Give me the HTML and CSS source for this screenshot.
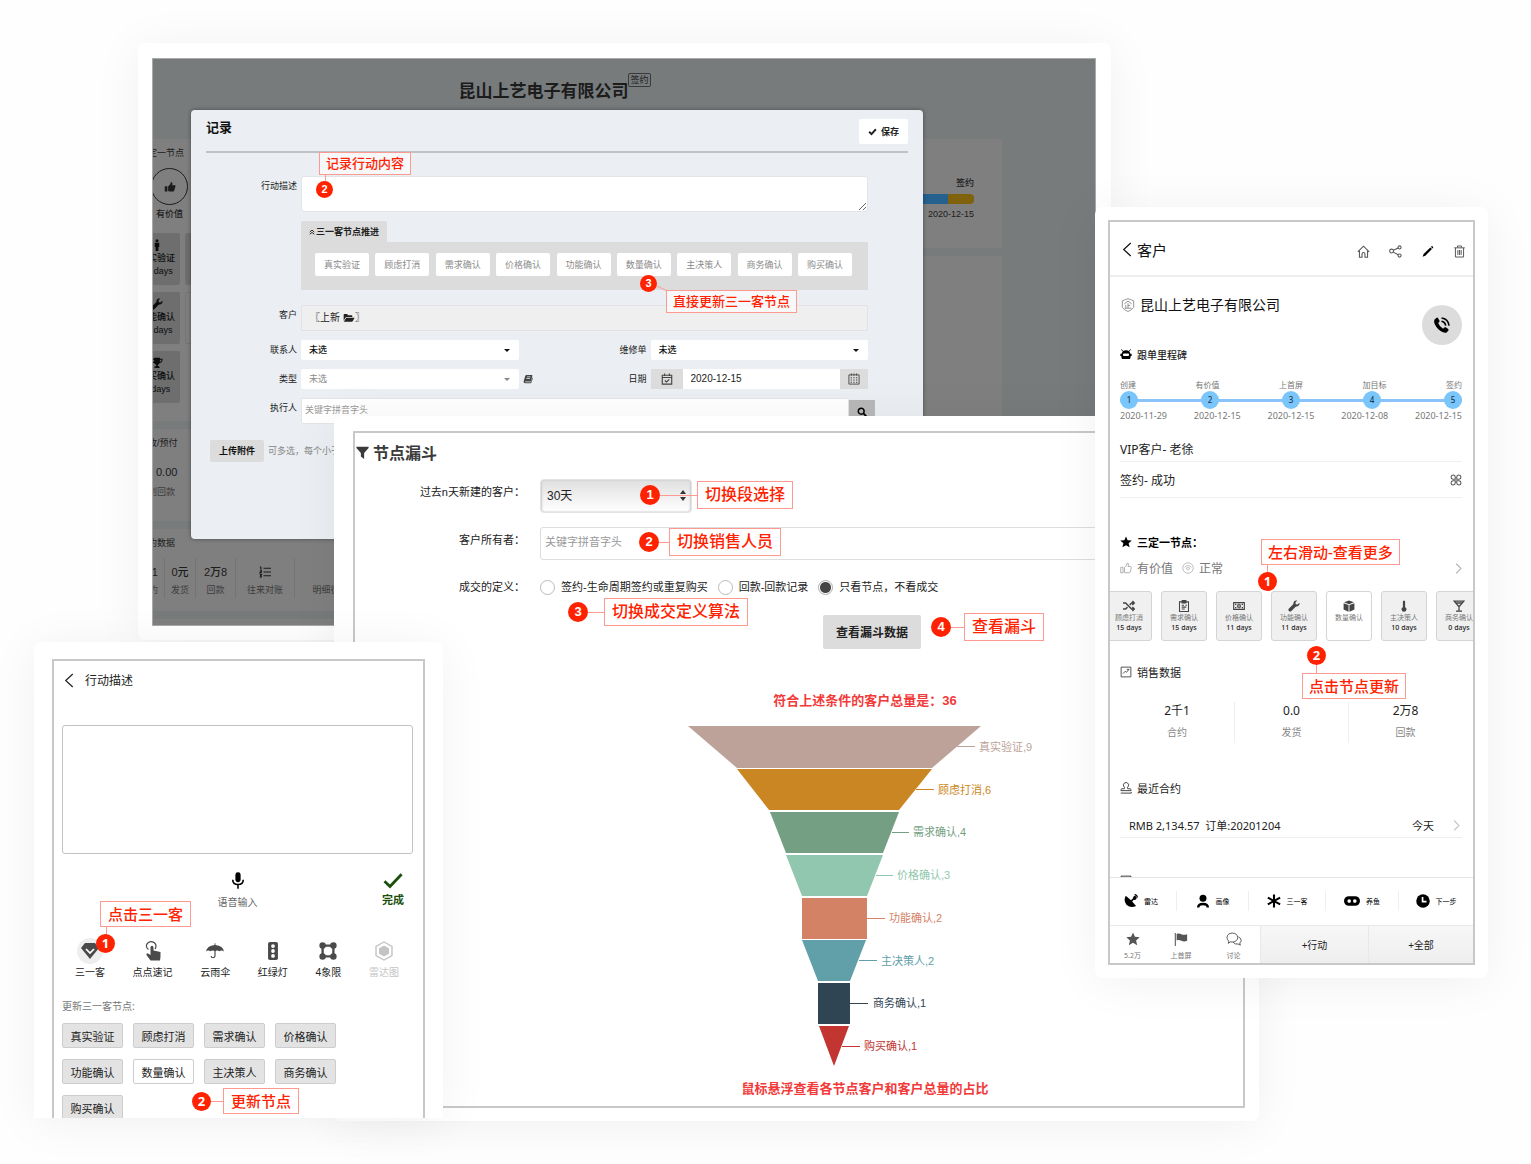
FILE: index.html
```html
<!DOCTYPE html>
<html lang="zh-CN">
<head>
<meta charset="utf-8">
<meta name="viewport" content="width=device-width, initial-scale=1">
<title>三一客节点</title>
<link rel="stylesheet" href="styles.css">
</head>
<body>
<svg class="sprite" aria-hidden="true">
  <symbol id="i-thumb" viewBox="0 0 16 16"><path d="M1 7h3.500v7H1zM5.500 7.200 8.600 4 9 1.300c1.800-.2 2.600 1.200 2 4.200h3.200c1 0 1.400.8 1.100 1.600l-1.600 5.600c-.3.900-.8 1.300-1.700 1.300H7.300l-1.800-.8z"/></symbol>
  <symbol id="i-person" viewBox="0 0 16 16"><circle cx="8" cy="2.200" r="2"/><path d="M5 5h6v5.500H9.900V16H6.100v-5.500H5z"/></symbol>
  <symbol id="i-wrench" viewBox="0 0 16 16"><path d="M15.200 3.600 12.600 6l-2.300-.4L9.900 3.400 12.400.8C9.500-.2 6.700 2 7.300 5.400L1 11.700c-1.700 1.800 1.400 4.900 3.200 3.200l6.400-6.300c3 .7 5.400-2 4.600-5z"/></symbol>
  <symbol id="i-cup" viewBox="0 0 16 16"><path d="M4 1h8v1.300h3.500c0 4-1.600 5.600-4.200 6-.6 1.200-1.300 1.700-2.200 2V12c1.700.2 2.400.9 2.400 2.500h-7c0-1.600.7-2.300 2.400-2.500v-1.700c-.9-.3-1.600-.8-2.200-2C2.100 7.900.5 6.300.5 2.300H4zM2 3.700c.2 1.700.8 2.600 2.100 3V3.700zm12 0h-2.100v3c1.300-.4 1.900-1.300 2.100-3z"/></symbol>
  <symbol id="i-list" viewBox="0 0 16 16"><path d="M6 3h10M6 8h10M6 13h10M2.500 1v4M1.500 2l1-1M1.200 6.500h2v1.300l-2 1.500h2M1.200 11.500h2l-1 1.500q1.500 0 .8 1.500-.6.600-1.800.1" fill="none" stroke="currentColor" stroke-width="1.600"/></symbol>
  <symbol id="i-check" viewBox="0 0 16 16"><path d="M2 8.500 6.200 12.500 14 4" fill="none" stroke="currentColor" stroke-width="3.400"/></symbol>
  <symbol id="i-tick" viewBox="0 0 20 16"><path d="M1.500 8.800 7 14 18.600 1.800" fill="none" stroke="currentColor" stroke-width="2.800"/></symbol>
  <symbol id="i-up" viewBox="0 0 16 16"><path d="M2 8l6-5 6 5M2 14l6-5 6 5" fill="none" stroke="currentColor" stroke-width="2.600"/></symbol>
  <symbol id="i-folder" viewBox="0 0 18 16"><path d="M1 12V3q0-1 1-1h4q1 0 1 1v1h6q1 0 1 1v1.500H5.500q-1.300 0-2 1.200zM4.800 7.700H17.500L14.500 13q-.4.700-1.200.7H1.200z"/></symbol>
  <symbol id="i-book" viewBox="0 0 16 16"><path d="M5.500 1.500H14q1.300 0 1 1.300L13 11q-.3 1-1.300 1H3.600q-1 .9.400 1.200h8.800L15 5.500q.9.700.6 1.800L13.600 13.600q-.3 1-1.500 1H3.500Q.5 14.500 1 11.500L3.600 3q.4-1.500 1.900-1.500zM6.500 4l-.3 1.200h5.600l.3-1.200zm-.8 2.500-.3 1.200H11l.3-1.200z"/></symbol>
  <symbol id="i-caldone" viewBox="0 0 16 16"><path d="M1.700 3h12.600v11.800H1.700zM2 6h12M4.800.5v3.500M11.200.5v3.500M5.200 10l2 2 3.800-3.600" fill="none" stroke="currentColor" stroke-width="1.500"/></symbol>
  <symbol id="i-cal" viewBox="0 0 16 16"><path d="M1.200 2.500h13.600v12.300H1.200zM4.500.5v3M8 .5v3M11.500.5v3" fill="none" stroke="currentColor" stroke-width="1.200"/><path d="M3.500 6.300h9M3.500 9.300h9M3.500 12.300h9" fill="none" stroke="currentColor" stroke-width="1.500" stroke-dasharray="1.800 1.800"/></symbol>
  <symbol id="i-search" viewBox="0 0 16 16"><path d="M10.300 10.300 15 15" stroke="currentColor" stroke-width="3"/><circle cx="6.700" cy="6.700" r="4.700" fill="none" stroke="currentColor" stroke-width="2.400"/></symbol>
  <symbol id="i-funnel" viewBox="0 0 16 16"><path d="M.5 1h15v1.500L10 8.500V16l-4-3V8.500L.5 2.500z"/></symbol>
  <symbol id="i-back" viewBox="0 0 10 16"><path d="M9 1 1.500 8 9 15" fill="none" stroke="currentColor" stroke-width="1.300"/></symbol>
  <symbol id="i-next" viewBox="0 0 10 16"><path d="M1.500 1 8.500 8l-7 7" fill="none" stroke="currentColor" stroke-width="1.500"/></symbol>
  <symbol id="i-home" viewBox="0 0 16 16"><path d="M1 8.500 8 1.500l7 7M3 7v8h3.200v-4q0-1.700 1.800-1.700t1.800 1.700v4H13V7" fill="none" stroke="currentColor" stroke-width="1.300"/></symbol>
  <symbol id="i-share" viewBox="0 0 16 16"><g fill="none" stroke="currentColor" stroke-width="1.300"><circle cx="3.200" cy="7.500" r="2.400"/><circle cx="13" cy="3" r="1.900"/><circle cx="13" cy="13" r="1.900"/><path d="M5.400 6.500 11.200 3.700M5.300 8.800l6 3.200"/></g></symbol>
  <symbol id="i-pen" viewBox="0 0 16 16"><path d="M2 14.500 3.200 11 11.500 3l2 2-8.200 8.300zM12.200 2.300l.7-.7q1-.5 1.700.3.700.8.200 1.700l-.7.700z"/></symbol>
  <symbol id="i-bin" viewBox="0 0 16 16"><path d="M1.500 3.500h13M5.500 3.200V1.200h5v2M3 3.500v11.300h10V3.500M6 6.200v6M8 6.200v6M10 6.200v6" fill="none" stroke="currentColor" stroke-width="1.200"/></symbol>
  <symbol id="i-firm" viewBox="0 0 16 16"><g fill="none" stroke="currentColor" stroke-width="1"><path d="M8 .8 14.500 3.200v7.600Q12 14.200 8 15.400 4 14.200 1.500 10.800V3.200z"/><path d="M3.800 6.800 8 3.500l4.200 3.300M8 6v5.500M8 8.500h2.500M5.500 8v3.500M4 11.700h8"/></g></symbol>
  <symbol id="i-call" viewBox="0 0 16 16"><path d="M1.200 3.300 3.200 1.500q.8-.4 1.300.4l1.300 2.300q.3.700-.3 1.200l-.9.900q1 3 4.400 5l1-1q.6-.6 1.300-.2l2.200 1.400q.7.600.2 1.300l-1.600 1.900Q9.500 15.500 5 12 0 7 1.200 3.300z"/><path d="M7.500 4.700q3.200.5 3.800 3.900M7.600 1.800q5.800.7 6.700 6.800" fill="none" stroke="currentColor" stroke-width="1.500"/></symbol>
  <symbol id="i-robot" viewBox="0 0 16 16"><path d="M4 4.500 1.800 1.800M12 4.500l2.200-2.700" stroke="currentColor" stroke-width="1.200"/><path fill-rule="evenodd" d="M8 3q5 0 5.700 4.500H15.500v3h-1.300q0 4.300-2.400 4.300H4.200q-2.400 0-2.400-4.300H.5v-3h1.800Q3 3 8 3zM5.500 7.300a1.700 1.700 0 0 0 0 3.400h5a1.700 1.700 0 0 0 0-3.400z"/></symbol>
  <symbol id="i-quad" viewBox="0 0 16 16"><g fill="none" stroke="currentColor" stroke-width="1.400"><path d="M7 7H4A2.800 2.800 0 1 1 7 4zM9 7V4a2.800 2.800 0 1 1 3 3zM7 9H4a2.800 2.800 0 1 0 3 3zM9 9v3a2.800 2.800 0 1 0 3-3z"/></g></symbol>
  <symbol id="i-star" viewBox="0 0 16 16"><path d="m8 .5 2.200 5 5.500.5-4.200 3.600 1.300 5.400L8 12.200 3.200 15l1.300-5.400L.3 6l5.500-.5z"/></symbol>
  <symbol id="i-like" viewBox="0 0 16 16"><path d="M1 7h3v7.500H1zM6 7l3-2.500V2q2-1.500 2.500.8 0 1.500-.7 3.200h3.700q.8.300.6 1.300l-1.400 6q-.3 1-1.300 1H6z" fill="none" stroke="currentColor" stroke-width="1.200"/></symbol>
  <symbol id="i-heart" viewBox="0 0 16 16"><g fill="none" stroke="currentColor"><circle cx="8" cy="8" r="7"/><path d="M3.500 7q4.500-4.500 9 0M5.500 8.500q2.500-2.500 5 0L8 11z"/></g></symbol>
  <symbol id="i-shuffle" viewBox="0 0 16 16"><path d="M0 4h3.500l8 8H14M0 12h3.500l2.500-2.500M9 6.500 11.500 4H14M12.500 1.500 15 4l-2.500 2.500M12.500 9.500 15 12l-2.500 2.500" fill="none" stroke="currentColor" stroke-width="1.900"/></symbol>
  <symbol id="i-clip" viewBox="0 0 16 16"><path d="M2 2.500h12v12.700H2zM5.500.8h5V4h-5zM5 7h3M5 9.500h6M5 12h4M10 7h2" fill="none" stroke="currentColor" stroke-width="1.400"/></symbol>
  <symbol id="i-cash" viewBox="0 0 18 16"><path d="M1 3h16v10H1zM9 5.500v5M3 5.500h2M13 5.500h2M3 10.500h2M13 10.500h2" fill="none" stroke="currentColor" stroke-width="1.700"/><ellipse cx="9" cy="8" rx="2.600" ry="3" fill="none" stroke="currentColor" stroke-width="1.300"/></symbol>
  <symbol id="i-box" viewBox="0 0 16 16"><path d="M8 .5 14.500 3 8 5.500 1.500 3zM.8 4.200l6.600 2.600v8.700L.8 12.500zM15.200 4.200 8.600 6.800v8.700l6.600-3z"/></symbol>
  <symbol id="i-thermo" viewBox="0 0 16 16"><path d="M6.500 2q1.500-2.500 3 0v7.500q2 1 1.800 3Q11 15.500 8 15.700q-3-.2-3.300-3.200-.2-2 1.800-3z"/></symbol>
  <symbol id="i-glass" viewBox="0 0 16 16"><path d="M1.500 1.500h13L8 9zM8 9v5.500M4 14.700h8M4 4h8" fill="none" stroke="currentColor" stroke-width="1.700"/></symbol>
  <symbol id="i-chart" viewBox="0 0 16 16"><path d="M1.500 1.500h13v13h-13zM4 10l3-3 1.500 1.500L12 4.500M9 4.500h3.200" fill="none" stroke="currentColor" stroke-width="1.200"/></symbol>
  <symbol id="i-stamp" viewBox="0 0 16 16"><path d="M5.800 9 6 7Q4 5.500 4.700 3q1-2.300 3.300-2.300T11.300 3Q12 5.500 10 7l.2 2h3.300q1.300.2 1.300 2.500H1.200Q1.200 9.200 2.500 9zM1 14.800h14v-1.500" fill="none" stroke="currentColor" stroke-width="1.300"/></symbol>
  <symbol id="i-dish" viewBox="0 0 16 16"><path d="M2 2Q-1 8 2.800 12.200 7.500 16.800 13.800 13.800L9.300 8.600l1.900-2q1.600.5 2.600-.5t.6-2.500Q13.500 1.900 11.800 2.300q-1.700.7-1.500 2.500L8 7.200z"/><path d="M12 .7q3 .3 3.400 3.300" fill="none" stroke="currentColor" stroke-width="1.200"/></symbol>
  <symbol id="i-user" viewBox="0 0 16 16"><circle cx="8" cy="4.800" r="4"/><path d="M2.500 15.500q0-4 5.500-4t5.500 4" fill="none" stroke="currentColor" stroke-width="2.800"/></symbol>
  <symbol id="i-aster" viewBox="0 0 16 16"><path d="M8 .5v15M1 4.200l14 7.600M1 11.800l14-7.600" stroke="currentColor" stroke-width="2.400"/></symbol>
  <symbol id="i-goggle" viewBox="0 0 20 16"><path fill-rule="evenodd" d="M6 2h8a6 6 0 0 1 0 12H6A6 6 0 0 1 6 2zm.5 3.800a2.200 2.200 0 1 0 .01 0zm7 0a2.200 2.200 0 1 0 .01 0z"/></symbol>
  <symbol id="i-clock" viewBox="0 0 16 16"><circle cx="8" cy="8" r="7.700"/><path d="M7.500 3.500v5.300H12" fill="none" stroke="#fff" stroke-width="1.900"/></symbol>
  <symbol id="i-flag" viewBox="0 0 16 16"><path d="M1.500 1v15" stroke="currentColor" stroke-width="1.200"/><path d="M3 2q3-1 5.500.5t6.500 0V10q-3.500 1.500-6.500 0T3 9.500z"/></symbol>
  <symbol id="i-chat" viewBox="0 0 18 16"><g fill="none" stroke="currentColor" stroke-width="1.100"><path d="M3 10.500Q1 8.800 1 6.400 1.300 1.500 7 1.200q6 .3 6.200 5.200Q13 11 7 11.500L4.800 11.300 2.500 13z"/><path d="M14 5.500q3 1.300 3.200 4-.2 2-1.600 3l.6 2.500-2.600-1.300Q10 14.500 8 11.700"/></g></symbol>
  <symbol id="i-mic" viewBox="0 0 16 20"><rect x="5" y=".5" width="6" height="11.500" rx="2.800"/><path d="M2 9q0 5.500 6 5.500T14 9M8 14.500v5" fill="none" stroke="currentColor" stroke-width="1.800"/></symbol>
  <symbol id="i-gem" viewBox="0 0 18 16"><path d="M4 0h10l4 5-9 11L0 5z"/><path d="M5 6l4 4 4-4" fill="none" stroke="#fff" stroke-width="1.700"/></symbol>
  <symbol id="i-tap" viewBox="0 0 16 20"><path d="M5.500 6V14L2.500 12.300Q1 12.500 1.500 14l4 5.500H15q.7-3 .5-8.500l-7-1.500V6Q7 3.500 5.500 6z"/><path d="M3.500 8.500Q1 6.800 1.500 4 3 .6 6.500.7q4 .6 4.500 4 0 2.300-1 3.300" fill="none" stroke="currentColor" stroke-width="1.200"/></symbol>
  <symbol id="i-rain" viewBox="0 0 20 18"><path d="M0 9.500Q1 3 9.500 2.200V.5h1v1.700Q19 3 20 9.500 17.500 7.600 15 9.300 12.500 7.600 10 9.300 7.500 7.600 5 9.300 2.500 7.600 0 9.500z"/><path d="M10 8.500v6q-.3 2-2.300 2t-2-2" fill="none" stroke="currentColor" stroke-width="1.300"/></symbol>
  <symbol id="i-light" viewBox="0 0 12 20"><rect x=".5" y="0" width="11" height="20" rx="2"/><g fill="#fff"><circle cx="6" cy="4.500" r="2.100"/><circle cx="6" cy="10" r="2.100"/><circle cx="6" cy="15.500" r="2.100"/></g></symbol>
  <symbol id="i-nodes" viewBox="0 0 20 20"><path d="M4 4h12v12H4z" fill="none" stroke="currentColor" stroke-width="2.600"/><circle cx="4" cy="4" r="3.600"/><circle cx="16" cy="4" r="3.600"/><circle cx="4" cy="16" r="3.600"/><circle cx="16" cy="16" r="3.600"/></symbol>
  <symbol id="i-hex" viewBox="0 0 20 20"><path d="M10 1l8 4.500v9L10 19l-8-4.500v-9z" fill="none" stroke="currentColor" stroke-width="1.400"/><path d="M10 4.500 15 7.300v5.400l-5 2.800-5-2.800V7.300z"/></symbol>
</svg>

<main class="stage">

  <section class="window win-record">
    <div class="screen screen-dim">
      <header class="firm">
        <h1>昆山上艺电子有限公司</h1><span class="firm-tag">签约</span>
      </header>
      <div class="board">
        <div class="board-col">
          <div class="panel panel-nodes">
            <h2>三定一节点</h2>
            <span class="round"><svg class="ic12"><use href="#i-thumb"/></svg></span>
            <p class="round-label">有价值</p>
            <div class="dim-tiles">
              <div class="dim-tile"><svg class="ic12"><use href="#i-person"/></svg><span>真实验证</span><b>15 days</b></div><div class="dim-tile"></div>
              <div class="dim-tile"><svg class="ic12"><use href="#i-wrench"/></svg><span>功能确认</span><b>11 days</b></div><div class="dim-tile clear"></div>
              <div class="dim-tile"><svg class="ic12"><use href="#i-cup"/></svg><span>购买确认</span><b>0 days</b></div>
            </div>
          </div>
          <div class="panel panel-plan">
            <h2>应收/预付</h2>
            <strong>0.00</strong>
            <span>计划回款</span>
          </div>
          <div class="panel panel-data">
            <h2>合约数据</h2>
            <ul class="dim-stats">
              <li><strong>2千1</strong><span>合约</span></li>
              <li><strong>0元</strong><span>发货</span></li>
              <li><strong>2万8</strong><span>回款</span></li>
              <li><strong><svg class="ic12"><use href="#i-list"/></svg></strong><span>往来对账</span></li>
              <li><strong></strong><span>明细往来</span></li>
            </ul>
          </div>
          <div class="panel panel-stub"></div>
        </div>
        <div class="board-col">
          <div class="panel panel-bar">
            <span class="bar-name">签约</span>
            <div class="bar"><i></i><i></i></div>
            <span>2020-12-15</span>
          </div>
          <div class="panel panel-rest"></div>
        </div>
      </div>

      <form class="modal">
        <header class="modal-head">
          <h2>记录</h2>
          <button type="button" class="save"><svg class="ic8"><use href="#i-check"/></svg>保存</button>
        </header>
        <div class="fields">
          <div class="line line-text">
            <label for="desc">行动描述</label>
            <textarea id="desc"></textarea>
          </div>
          <div class="line line-nodes">
            <div class="push">
              <button type="button" class="tab"><svg class="ic6"><use href="#i-up"/></svg>三一客节点推进</button>
              <div class="push-list">
                <button type="button">真实验证</button><button type="button">顾虑打消</button><button type="button">需求确认</button><button type="button">价格确认</button><button type="button">功能确认</button><button type="button">数量确认</button><button type="button">主决策人</button><button type="button">商务确认</button><button type="button">购买确认</button>
              </div>
            </div>
          </div>
          <div class="line line-client">
            <span class="cap">客户</span>
            <div class="client">〖上新 <svg class="ic12"><use href="#i-folder"/></svg>〗</div>
          </div>
          <div class="line line-two">
            <label for="contact">联系人</label>
            <div class="pick"><select id="contact"><option>未选</option></select></div>
            <label for="repair">维修单</label>
            <div class="pick"><select id="repair"><option>未选</option></select></div>
          </div>
          <div class="line line-two">
            <label for="kind">类型</label>
            <div class="pick pale"><select id="kind"><option>未选</option></select></div>
            <div class="cap-pair"><svg class="ic10"><use href="#i-book"/></svg><label for="date">日期</label></div>
            <div class="date"><span><svg class="ic12"><use href="#i-caldone"/></svg></span><input id="date" type="text" value="2020-12-15"><button type="button" aria-label="日历"><svg class="ic12"><use href="#i-cal"/></svg></button></div>
          </div>
          <div class="line line-who">
            <label for="who">执行人</label>
            <div class="who"><input id="who" type="text" placeholder="关键字拼音字头"><button type="button" aria-label="搜索"><svg class="ic10"><use href="#i-search"/></svg></button></div>
          </div>
        </div>
        <footer class="upload"><button type="button">上传附件</button><span>可多选，每个小于10M</span></footer>
      </form>

      <div class="note note-down small n-desc"><span class="tag">记录行动内容</span><i class="stem"></i><b class="pin">2</b></div>
      <div class="note small n-push"><b class="pin">3</b><svg class="slant" viewBox="0 0 9 6"><path d="M0 1 9 5.500" stroke="#ff9a90" fill="none"/></svg><span class="tag">直接更新三一客节点</span></div>
    </div>
  </section>

  <section class="window win-funnel">
    <div class="screen screen-funnel">
      <h2 class="funnel-title"><svg class="ic13"><use href="#i-funnel"/></svg>节点漏斗</h2>
      <form class="query">
        <div class="q-row">
          <label for="days">过去n天新建的客户：</label>
          <div class="days"><select id="days"><option>30天</option></select></div>
        </div>
        <div class="q-row">
          <label for="owner">客户所有者：</label>
          <input id="owner" type="text" placeholder="关键字拼音字头">
        </div>
        <div class="q-row q-radios">
          <span class="q-cap">成交的定义：</span>
          <div class="radios">
            <label><input type="radio" name="deal">签约-生命周期签约或重复购买</label>
            <label><input type="radio" name="deal">回款-回款记录</label>
            <label><input type="radio" name="deal" checked>只看节点，不看成交</label>
          </div>
        </div>
        <button type="button" class="run">查看漏斗数据</button>
      </form>
      <figure class="chart">
        <p>符合上述条件的客户总量是：36</p>
        <svg class="funnel" viewBox="540 716 650 356" role="img" aria-label="节点漏斗">
          <path fill="#bda29a" d="M688 726H981L932 768H737z"/>
          <path fill="#ca8622" d="M737 769H932L899 810H769z"/>
          <path fill="#749f83" d="M770 812H899L883 853H786z"/>
          <path fill="#91c7ae" d="M786 855H883L867 896H802z"/>
          <path fill="#d48265" d="M802 898H867V939H802z"/>
          <path fill="#61a0a8" d="M802 940H866L850 981H818z"/>
          <path fill="#2f4554" d="M818 983H850V1024H818z"/>
          <path fill="#c23531" d="M819 1026H849L834 1066z"/>
          <g fill="none">
            <path stroke="#bda29a" d="M957 746.500h18"/><path stroke="#ca8622" d="M916 789.500h18"/><path stroke="#749f83" d="M892 832.500h17"/><path stroke="#91c7ae" d="M876 875.500h17"/><path stroke="#d48265" d="M867 918.500h18"/><path stroke="#61a0a8" d="M859 960.500h18"/><path stroke="#2f4554" d="M850 1003.500h18"/><path stroke="#c23531" d="M842 1046.500h18"/>
          </g>
          <g class="funnel-text">
            <text x="979" y="751" fill="#bda29a">真实验证,9</text>
            <text x="938" y="794" fill="#ca8622">顾虑打消,6</text>
            <text x="913" y="836" fill="#749f83">需求确认,4</text>
            <text x="897" y="879" fill="#91c7ae">价格确认,3</text>
            <text x="889" y="922" fill="#d48265">功能确认,2</text>
            <text x="881" y="965" fill="#61a0a8">主决策人,2</text>
            <text x="873" y="1007" fill="#2f4554">商务确认,1</text>
            <text x="864" y="1050" fill="#c23531">购买确认,1</text>
          </g>
        </svg>
        <figcaption>鼠标悬浮查看各节点客户和客户总量的占比</figcaption>
      </figure>
      <div class="note n-days"><b class="pin">1</b><i class="stem long"></i><span class="tag">切换段选择</span></div>
      <div class="note n-owner"><b class="pin">2</b><i class="stem"></i><span class="tag">切换销售人员</span></div>
      <div class="note n-deal"><b class="pin">3</b><i class="stem wide"></i><span class="tag">切换成交定义算法</span></div>
      <div class="note n-run"><b class="pin">4</b><i class="stem"></i><span class="tag">查看漏斗</span></div>
    </div>
  </section>

  <section class="window win-client">
    <div class="screen screen-client">
      <header class="c-head">
        <a href="#" class="c-back"><svg class="chev"><use href="#i-back"/></svg>客户</a>
        <nav><a href="#" aria-label="首页"><svg class="ic13"><use href="#i-home"/></svg></a><a href="#" aria-label="分享"><svg class="ic13"><use href="#i-share"/></svg></a><a href="#" aria-label="编辑" class="ink"><svg class="ic13"><use href="#i-pen"/></svg></a><a href="#" aria-label="删除"><svg class="ic13"><use href="#i-bin"/></svg></a></nav>
      </header>
      <div class="c-body">
        <div class="c-intro">
          <div>
            <h1><svg class="ic14"><use href="#i-firm"/></svg>昆山上艺电子有限公司</h1>
            <h2 class="c-sec"><svg class="ic12"><use href="#i-robot"/></svg>跟单里程碑</h2>
          </div>
          <button type="button" class="call" aria-label="拨打"><svg class="ic18"><use href="#i-call"/></svg></button>
        </div>
        <div class="steps">
          <div class="step-row step-name"><span>创建</span><span>有价值</span><span>上首屏</span><span>加目标</span><span>签约</span></div>
          <div class="step-row step-dots"><b>1</b><b>2</b><b>3</b><b>4</b><b>5</b></div>
          <div class="step-row step-date"><span>2020-11-29</span><span>2020-12-15</span><span>2020-12-15</span><span>2020-12-08</span><span>2020-12-15</span></div>
        </div>
        <p class="c-line first">VIP客户- 老徐</p>
        <p class="c-line">签约- 成功<svg class="ic12"><use href="#i-quad"/></svg></p>
        <h2 class="c-sec strong s-nodes"><svg class="ic12"><use href="#i-star"/></svg>三定一节点：</h2>
        <p class="c-state"><svg class="ic12"><use href="#i-like"/></svg>有价值<svg class="ic12"><use href="#i-heart"/></svg>正常<svg class="chev small-chev"><use href="#i-next"/></svg></p>
      </div>
      <div class="tiles">
        <button type="button"><svg class="ic12"><use href="#i-shuffle"/></svg><span>顾虑打消</span><b>15 days</b></button>
        <button type="button"><svg class="ic12"><use href="#i-clip"/></svg><span>需求确认</span><b>15 days</b></button>
        <button type="button"><svg class="ic12"><use href="#i-cash"/></svg><span>价格确认</span><b>11 days</b></button>
        <button type="button"><svg class="ic12"><use href="#i-wrench"/></svg><span>功能确认</span><b>11 days</b></button>
        <button type="button" class="on"><svg class="ic12"><use href="#i-box"/></svg><span>数量确认</span></button>
        <button type="button"><svg class="ic12"><use href="#i-thermo"/></svg><span>主决策人</span><b>10 days</b></button>
        <button type="button"><svg class="ic12"><use href="#i-glass"/></svg><span>商务确认</span><b>0 days</b></button>
      </div>
      <div class="c-body">
        <h2 class="c-sec s-sales"><svg class="ic12"><use href="#i-chart"/></svg>销售数据</h2>
        <ul class="sums"><li><strong>2千1</strong><span>合约</span></li><li><strong>0.0</strong><span>发货</span></li><li><strong>2万8</strong><span>回款</span></li></ul>
        <h2 class="c-sec s-deals"><svg class="ic12"><use href="#i-stamp"/></svg>最近合约</h2>
        <a href="#" class="deal"><span>RMB 2,134.57&nbsp; 订单:20201204</span><span>今天</span><svg class="chev small-chev"><use href="#i-next"/></svg></a>
        <div class="peek"><svg class="ic12"><use href="#i-chart"/></svg></div>
      </div>
      <nav class="tools">
        <a href="#"><svg class="ic14"><use href="#i-dish"/></svg>雷达</a><a href="#"><svg class="ic14"><use href="#i-user"/></svg>画像</a><a href="#"><svg class="ic14"><use href="#i-aster"/></svg>三一客</a><a href="#"><svg class="ic16"><use href="#i-goggle"/></svg>养鱼</a><a href="#"><svg class="ic14"><use href="#i-clock"/></svg>下一步</a>
      </nav>
      <footer class="dock">
        <a href="#"><svg class="ic14"><use href="#i-star"/></svg>5.2万</a><a href="#"><svg class="ic14"><use href="#i-flag"/></svg>上首屏</a><a href="#" class="last"><svg class="ic16"><use href="#i-chat"/></svg>讨论</a>
        <button type="button">+行动</button><button type="button">+全部</button>
      </footer>
      <div class="note note-down mid n-swipe"><span class="tag">左右滑动-查看更多</span><i class="stem"></i><b class="pin">1</b></div>
      <div class="note note-down mid n-tap"><b class="pin">2</b><i class="stem"></i><span class="tag">点击节点更新</span></div>
    </div>
  </section>

  <section class="window win-action">
    <div class="screen screen-action">
      <header class="a-head"><a href="#"><svg class="chev"><use href="#i-back"/></svg>行动描述</a></header>
      <textarea aria-label="行动描述"></textarea>
      <div class="a-voice">
        <button type="button"><svg class="mic"><use href="#i-mic"/></svg>语音输入</button>
        <button type="button" class="done"><svg class="tick"><use href="#i-tick"/></svg>完成</button>
      </div>
      <nav class="a-tools">
        <a href="#" class="on"><i><svg class="ic18"><use href="#i-gem"/></svg></i>三一客</a>
        <a href="#"><i><svg class="ic20"><use href="#i-tap"/></svg></i>点点速记</a>
        <a href="#"><i><svg class="ic18"><use href="#i-rain"/></svg></i>云雨伞</a>
        <a href="#"><i><svg class="ic18"><use href="#i-light"/></svg></i>红绿灯</a>
        <a href="#"><i><svg class="ic18"><use href="#i-nodes"/></svg></i>4象限</a>
        <a href="#" class="off"><i><svg class="ic20"><use href="#i-hex"/></svg></i>雷达图</a>
      </nav>
      <p class="a-cap">更新三一客节点:</p>
      <div class="a-nodes">
        <button type="button">真实验证</button><button type="button">顾虑打消</button><button type="button">需求确认</button><button type="button">价格确认</button><button type="button">功能确认</button><button type="button" class="on">数量确认</button><button type="button">主决策人</button><button type="button">商务确认</button><button type="button">购买确认</button>
      </div>
      <div class="note note-down mid n-open"><span class="tag">点击三一客</span><i class="stem"></i><b class="pin">1</b></div>
      <div class="note mid n-update"><b class="pin">2</b><i class="stem"></i><span class="tag">更新节点</span></div>
    </div>
  </section>
</main>
</body>
</html>
```
FILE: styles.css
```css
*,
*::before,
*::after { box-sizing: border-box; }

body {
  margin: 0;
  background: #fefefe;
  color: #222;
  font-family: "Liberation Sans", "Noto Sans CJK SC", sans-serif;
  font-size: 11px;
}

h1, h2, p, ul, figure { margin: 0; padding: 0; font-weight: 400; }
ul { list-style: none; }
a { color: inherit; text-decoration: none; }
i { font-style: normal; }
button, input, select, textarea {
  margin: 0;
  padding: 0;
  border: 0;
  border-radius: 0;
  background: none;
  color: inherit;
  font: inherit;
  outline: 0;
}
select { appearance: none; }
svg { display: block; flex: none; fill: currentColor; }
.sprite { display: none; }
.ic6 { width: 6px; height: 6px; }
.ic8 { width: 9px; height: 9px; }
.ic10 { width: 10px; height: 10px; }
.ic12 { width: 12px; height: 12px; }
.ic13 { width: 13px; height: 13px; }
.ic14 { width: 14px; height: 14px; }
.ic16 { width: 16px; height: 14px; }
.ic18 { width: 18px; height: 18px; }
.ic20 { width: 20px; height: 20px; }
.chev { width: 10px; height: 15px; }
.small-chev { width: 7px; height: 11px; color: #bbb; }

/* Overlapping windows on a free canvas */
.stage { position: relative; min-height: max(100vh, 1164px); overflow: hidden; }
.window {
  position: absolute;
  border-radius: 8px;
  background: #fff;
  box-shadow: 0 4px 50px rgba(20, 24, 40, .06);
}
.win-record { left: 138px; right: 420px; top: 43px; padding: 15px 15px 14px 14px; }
.win-funnel { left: 334px; right: 272px; top: 416px; padding: 15px 14px 13px 19px; }
.win-client { right: 43px; top: 207px; width: 393px; padding: 13px; }
.win-action { left: 34px; top: 642px; width: 409px; padding: 17px 18px 0; border-radius: 8px 8px 0 0; }
.screen { position: relative; border: 2px solid #c8c8c8; }

/* Notes: numbered pin, stem and tag */
.note { position: absolute; display: flex; align-items: center; white-space: nowrap; }
.note-down { flex-direction: column; align-items: flex-start; }
.tag {
  padding: 0 7px;
  border: 1px solid #ff9a90;
  background: rgba(255, 255, 255, .6);
  color: #ff2200;
  font-size: 16px;
  font-weight: 500;
  line-height: 26px;
}
.mid .tag { font-size: 15px; line-height: 24px; }
.small .tag { padding: 0 6px; font-size: 13px; line-height: 21px; }
.pin {
  width: 20px;
  border-radius: 50%;
  background: #ff2200;
  color: #fff;
  font-size: 13px;
  line-height: 20px;
  text-align: center;
}
.small .pin { width: 17px; font-size: 11px; line-height: 17px; }
.stem { width: 10px; height: 1px; background: #ff9a90; }
.stem.long { width: 37px; }
.stem.wide { width: 16px; }
.note-down .stem { width: 1px; height: 7px; margin-left: 6px; }

/* Customer page behind the dialog */
.screen-dim {
  overflow: hidden;
  border: 1px solid #aaa;
  background: #777b7c;
  color: #1c1c1c;
  font-size: 9px;
  line-height: 12px;
}
.firm { display: flex; justify-content: center; height: 80px; padding: 14px 139px 0 0; }
.firm h1 { padding-top: 7px; font-size: 17px; font-weight: 700; line-height: 24px; }
.firm-tag { align-self: flex-start; padding: 0 1px; border: 1px solid #3a3a3a; border-radius: 2px; }
.board {
  display: grid;
  grid-template-columns: 3fr 2fr;
  gap: 8px;
  margin-left: -21px;
  padding-right: 93px;
}
.board-col { display: flex; flex-direction: column; gap: 8px; }
.panel { padding: 8px 7px 0; border-radius: 2px; background: #7f7f7f; }
.panel h2 { font-size: 9px; line-height: 12px; }
.panel-nodes { height: 282px; }
.panel-plan { display: flex; flex-direction: column; align-items: flex-start; height: 92px; }
.panel-plan strong { padding: 16px 0 7px 17px; font-size: 11px; font-weight: 400; line-height: 14px; }
.panel-plan span { color: #3c3c3c; }
.panel-data { height: 82px; }
.panel-stub { height: 6px; padding: 0; }
.panel-rest { flex: 1; }
.round {
  display: grid;
  place-items: center;
  width: 37px;
  height: 37px;
  margin: 9px 0 3px 12px;
  border: 1px solid #1c1c1c;
  border-radius: 50%;
}
.round-label { padding-left: 17px; font-weight: 500; }
.dim-tiles { display: grid; grid-template-columns: 46px 46px; gap: 7px 5px; margin: 13px 0 0 -5px; }
.dim-tile {
  display: flex;
  flex-direction: column;
  align-items: center;
  height: 52px;
  padding-top: 6px;
  border-radius: 2px;
  background: #6e6e6e;
  color: #0c0c0c;
  line-height: 14px;
  font-weight: 500;
}
.dim-tile b { font-weight: 400; line-height: 12px; }
.dim-tile.clear { border: 1px solid #747474; background: none; }
.dim-stats { display: grid; grid-template-columns: 26px 31px 40px 59px 72px; margin-top: 9px; }
.dim-stats li {
  display: flex;
  flex-direction: column;
  align-items: center;
  gap: 6px;
  height: 40px;
  padding-top: 8px;
  border-right: 1px solid #747474;
  white-space: nowrap;
}
.dim-stats li:first-child { align-items: flex-end; padding-right: 6px; }
.dim-stats strong { height: 12px; font-size: 11px; font-weight: 500; }
.dim-stats span { color: #3c3c3c; }
.panel-bar { display: flex; flex-direction: column; align-items: flex-end; height: 109px; padding: 38px 28px 0 0; }
.bar-name { font-weight: 500; }
.bar { display: flex; align-self: stretch; height: 10px; margin: 5px 0 4px; }
.bar i { flex: 1; background: #24618e; }
.bar i:last-child { flex: 0 0 26px; border-radius: 0 4px 4px 0; background: #80620c; }

/* Dialog */
.modal {
  position: absolute;
  left: 38px;
  right: 172px;
  top: 51px;
  padding: 0 15px 77px;
  border-radius: 4px;
  background: #ebeef2;
  box-shadow: 0 0 4px rgba(0, 0, 0, .4);
  color: #222;
}
.modal-head {
  display: flex;
  justify-content: space-between;
  height: 43px;
  padding-top: 9px;
  border-bottom: 2px solid #bfc1c3;
}
.modal-head h2 { color: #111; font-size: 13px; font-weight: 700; line-height: 18px; }
.save {
  display: flex;
  align-items: center;
  gap: 4px;
  height: 25px;
  padding: 0 9px;
  border-radius: 2px;
  background: #fff;
  font-weight: 700;
}
.fields { display: flex; flex-direction: column; gap: 9px; padding: 23px 40px 0 0; }
.line { display: grid; grid-template-columns: 91px minmax(0, 1fr); gap: 4px; line-height: 20px; }
.line > label, .cap { text-align: right; }
.line-two { grid-template-columns: 91px minmax(0, 1fr) 124px minmax(0, 1fr); }
.line-text textarea { height: 36px; border: 1px solid #e2e4e8; border-radius: 3px; background: #fff; }
.push { grid-column: 2; }
.tab {
  display: flex;
  align-items: center;
  gap: 1px;
  height: 21px;
  padding: 0 8px;
  border-radius: 2px 2px 0 0;
  background: #dcdcdc;
  font-weight: 700;
}
.push-list { display: flex; justify-content: space-between; height: 48px; padding: 11px 16px 11px 14px; background: #dcdcdc; }
.push-list button { width: 54px; height: 23px; border-radius: 2px; background: #fff; color: #8a8a8a; }
.line-client { padding: 6px 0 0; }
.client {
  display: flex;
  align-items: center;
  height: 26px;
  padding-left: 8px;
  border: 1px solid #e2e2e4;
  border-radius: 2px;
  background: #efefef;
  font-size: 10px;
}
.client svg { margin-left: 3px; }
.pick { position: relative; height: 20px; border-radius: 2px; background: #fff; color: #111; }
.pick select { width: 100%; height: 20px; padding-left: 8px; font-weight: 500; }
.pick::after {
  content: "";
  position: absolute;
  right: 9px;
  top: 9px;
  border: 3px solid transparent;
  border-top-color: currentColor;
  pointer-events: none;
}
.pick.pale { color: #888; }
.pick.pale select { font-weight: 400; }
.cap-pair { display: flex; justify-content: space-between; align-items: center; color: #222; }
.cap-pair svg { color: #444; }
.date { display: grid; grid-template-columns: 32px minmax(0, 1fr) 28px; height: 20px; }
.date span, .date button { display: grid; place-items: center; background: #dcdcdc; color: #444; }
.date input { padding-left: 8px; background: #fff; font-size: 10px; }
.who { display: grid; grid-template-columns: minmax(0, 1fr) 26px; height: 26px; margin-right: -7px; }
.who input { padding: 0 3px 3px; border: 1px solid #e2e4e8; border-radius: 2px; background: #fff; }
.who button { display: grid; place-items: center; margin-top: 2px; background: #b8b8b8; color: #000; }
::placeholder { color: #999; opacity: 1; }
.upload { display: flex; align-items: center; gap: 4px; padding: 16px 0 0 4px; color: #888; }
.upload button { width: 54px; height: 22px; border-radius: 2px; background: #dcdcdc; color: #111; font-weight: 700; }
.n-desc { left: 166px; top: 93px; }
.n-desc .stem { height: 6px; }
.n-desc .pin { margin-left: -3px; }
.n-push { left: 487px; top: 216px; align-items: flex-start; }
.n-push .tag { margin-top: 15px; }
.slant { width: 9px; height: 6px; margin-top: 10px; }

/* Funnel */
.screen-funnel { padding: 7px 53px 7px 0; color: #222; }
.funnel-title {
  display: flex;
  align-items: center;
  gap: 4px;
  height: 24px;
  padding-left: 1px;
  color: #3a3a3a;
  font-size: 16px;
  font-weight: 700;
}
.query { display: flex; flex-direction: column; gap: 14px; padding-top: 15px; }
.q-row { display: grid; grid-template-columns: 170px minmax(0, 1fr); gap: 15px; line-height: 26px; }
.q-row > label, .q-cap { text-align: right; }
.q-radios { padding-top: 4px; line-height: 18px; }
.days { position: relative; width: 152px; height: 34px; }
.days select {
  width: 100%;
  height: 34px;
  padding-left: 6px;
  border: 1px solid #e2e2e2;
  border-radius: 4px;
  background: linear-gradient(#e0e0e0, #fff);
  box-shadow: inset 1px 0 2px #ccc, inset -1px 0 2px #ccc;
  font-size: 12px;
}
.days::before, .days::after {
  content: "";
  position: absolute;
  right: 6px;
  top: 8px;
  border: 3px solid transparent;
  border-bottom: 4px solid #333;
}
.days::after { top: 18px; border-bottom: 3px solid transparent; border-top: 4px solid #333; }
.q-row > input { height: 33px; padding: 0 4px 4px; border: 1px solid #ddd; border-radius: 3px; }
.radios { display: flex; gap: 10px; white-space: nowrap; }
.radios label { display: flex; align-items: center; gap: 6px; }
.radios input {
  appearance: none;
  width: 15px;
  height: 15px;
  border: 1px solid #bbb;
  border-radius: 50%;
  background: #fff;
}
.radios input:checked { border-color: #aaa; background: radial-gradient(circle, #444 5px, #fff 6px); }
.run {
  width: 98px;
  height: 34px;
  margin: 5px 0 0 468px;
  padding-bottom: 2px;
  border-radius: 2px;
  background: #dcdcdc;
  color: #222;
  font-size: 12px;
  font-weight: 700;
}
.chart { padding: 42px 0 0 185px; color: #f23a3a; font-size: 13px; line-height: 20px; text-align: center; }
.chart p, .chart figcaption { font-weight: 700; }
.funnel { width: 100%; height: 356px; margin: 5px 0 7px; }
.funnel-text { font-size: 11px; text-anchor: start; }
.n-days { left: 285px; top: 48px; }
.n-owner { left: 284px; top: 95px; }
.n-deal { left: 213px; top: 165px; }
.n-run { left: 576px; top: 180px; }
.n-run .stem { width: 13px; }

/* Customer phone */
.screen-client, .screen-action { font-family: "Noto Sans", "Noto Sans CJK SC", sans-serif; }
.screen-client { overflow: hidden; }
.c-head {
  display: flex;
  justify-content: space-between;
  align-items: center;
  height: 55px;
  padding: 5px 7px 0 12px;
  border-bottom: 2px solid #eee;
}
.c-back { display: flex; align-items: center; gap: 5px; padding-bottom: 3px; color: #111; font-size: 15px; }
.c-head nav { display: flex; gap: 19px; color: #555; }
.c-head .ink { color: #000; }
.c-body { padding: 0 11px 0 10px; }
.c-intro { display: flex; justify-content: space-between; align-items: flex-start; padding-top: 18px; }
.c-intro h1 {
  display: flex;
  align-items: center;
  gap: 5px;
  padding-left: 1px;
  margin-bottom: 29px;
  color: #111;
  font-size: 14px;
  line-height: 20px;
}
.c-intro h1 svg { color: #888; }
.c-sec { display: flex; align-items: center; gap: 5px; height: 20px; font-size: 11px; }
.c-sec svg { color: #444; }
.c-intro .c-sec { font-size: 10px; font-weight: 500; }
.c-intro .c-sec svg, .c-sec.strong svg { color: #000; }
.c-sec.strong { color: #000; font-weight: 700; }
.call {
  display: grid;
  place-items: center;
  width: 40px;
  height: 40px;
  margin-top: 10px;
  border-radius: 50%;
  background: #dcdcdc;
  color: #000;
}
.steps { padding-top: 15px; color: #777; line-height: 12px; }
.step-row { display: flex; justify-content: space-between; }
.step-name { font-size: 8px; }
.step-dots { background: linear-gradient(#8ac2fa, #8ac2fa) center / 100% 3px no-repeat; }
.step-dots b {
  width: 18px;
  border-radius: 50%;
  background: #7ac6fb;
  color: #1d3c55;
  font-size: 8px;
  line-height: 18px;
  text-align: center;
  font-weight: 500;
}
.step-date { padding-top: 1px; font-size: 9px; }
.c-line {
  display: flex;
  justify-content: space-between;
  align-items: center;
  height: 36px;
  border-bottom: 1px solid #f0f0f0;
  font-size: 12px;
}
.c-line.first { height: 26px; margin-top: 14px; }
.c-line svg { color: #555; }
.s-nodes { margin-top: 34px; }
.c-state { display: flex; align-items: center; height: 20px; gap: 5px; margin-top: 6px; color: #777; font-size: 12px; }
.c-state svg { color: #aaa; }
.c-state svg:nth-of-type(2) { margin-left: 4px; }
.c-state .small-chev { margin-left: auto; }
.tiles { display: flex; gap: 9px; margin: 13px 0 0 -4px; }
.tiles button {
  display: flex;
  flex: none;
  flex-direction: column;
  align-items: center;
  width: 46px;
  height: 50px;
  padding-top: 8px;
  border: 1px solid #d4d4d4;
  border-radius: 3px;
  background: #f0f0f0;
  color: #444;
  font-size: 7px;
  line-height: 10px;
}
.tiles span { padding-top: 1px; color: #777; }
.tiles b { color: #222; font-weight: 500; }
.tiles .on { background: #fff; }
.s-sales { margin-top: 21px; }
.sums { display: grid; grid-template-columns: repeat(3, 1fr); margin-top: 20px; text-align: center; }
.sums li { display: flex; flex-direction: column; gap: 5px; height: 41px; }
.sums li + li { border-left: 1px solid #eee; }
.sums strong { font-size: 12px; font-weight: 400; line-height: 18px; }
.sums span { color: #888; font-size: 10px; line-height: 14px; }
.s-deals { margin-top: 35px; }
.deal {
  display: flex;
  align-items: center;
  height: 22px;
  margin-top: 18px;
  padding: 0 2px 3px 9px;
  border-bottom: 1px solid #eee;
}
.deal span:first-child { flex: 1; }
.deal .small-chev { margin-left: 19px; }
.peek { height: 2px; margin-top: 37px; overflow: hidden; }
.tools {
  display: grid;
  grid-template-columns: 66fr 72fr 77fr 73fr 75fr;
  align-items: center;
  height: 48px;
  padding-bottom: 2px;
  border-top: 1px solid #e4e4e4;
  color: #000;
  font-size: 7px;
}
.tools a { display: flex; align-items: center; justify-content: center; gap: 6px; height: 20px; }
.tools a + a { border-left: 1px solid #eee; }
.tools a:first-child { padding-right: 4px; }
.dock {
  display: grid;
  grid-template-columns: 45fr 52fr 53fr 108fr 105fr;
  height: 38px;
  border-top: 1px solid #e8e8e8;
  color: #777;
}
.dock a { display: flex; flex-direction: column; align-items: center; gap: 5px; padding-top: 6px; font-size: 7px; line-height: 10px; }
.dock a svg { color: #555; }
.dock button { border-left: 1px solid #e8e8e8; background: linear-gradient(#f7f7f7, #eee); color: #222; font-size: 10px; }
.n-swipe { left: 151px; top: 317px; }
.n-swipe .pin { margin-left: -3px; }
.mid .pin { width: 19px; line-height: 19px; }
.screen-client .tag { padding: 0 6px; }
.n-tap { left: 192px; top: 424px; }
.n-tap .pin { margin-left: 5px; }
.n-tap .stem { margin-left: 14px; height: 8px; }

/* Action phone */
.screen-action { padding: 0 10px 0 8px; border-bottom: 0; }
.a-head { display: flex; align-items: center; height: 38px; padding-left: 2px; font-size: 12px; }
.a-head a { display: flex; align-items: center; gap: 11px; }
.screen-action textarea {
  display: block;
  width: 100%;
  height: 129px;
  margin-top: 26px;
  border: 1px solid #c2c2c2;
  border-radius: 3px;
  resize: none;
}
.a-voice { display: grid; grid-template-columns: 1fr auto 1fr; margin-top: 17px; }
.a-voice button { grid-column: 2; display: flex; flex-direction: column; align-items: center; gap: 3px; color: #666; font-size: 10px; line-height: 18px; }
.a-voice .done { grid-column: 3; justify-self: end; margin-right: 9px; gap: 1px; color: #1b4f0c; font-size: 11px; font-weight: 700; }
.mic { width: 14px; height: 19px; color: #000; }
.tick { width: 20px; height: 19px; }
.a-tools { display: flex; justify-content: space-between; margin-top: 27px; padding: 0 14px 0 13px; }
.a-tools a { display: flex; flex-direction: column; align-items: center; font-size: 10px; line-height: 16px; }
.a-tools i { display: grid; place-items: center; width: 26px; height: 26px; border-radius: 50%; color: #4a4a4a; }
.a-tools .on i { background: #eee; }
.a-tools .off, .a-tools .off i { color: #c4c4c4; }
.a-cap { padding: 18px 0 9px; color: #777; font-size: 10px; line-height: 16px; }
.a-nodes {
  display: grid;
  grid-template-columns: repeat(4, 61px);
  gap: 11px 10px;
  max-height: 95px;
  overflow: hidden;
}
.a-nodes button {
  height: 25px;
  border: 1px solid #cdcdcd;
  border-radius: 2px;
  background: #e3e3e3;
}
.a-nodes .on { background: #fff; }
.n-open { left: 46px; top: 240px; }
.n-open .pin { margin-left: -4px; }
.n-update { left: 138px; top: 427px; }
.n-update .stem { width: 12px; }
```
